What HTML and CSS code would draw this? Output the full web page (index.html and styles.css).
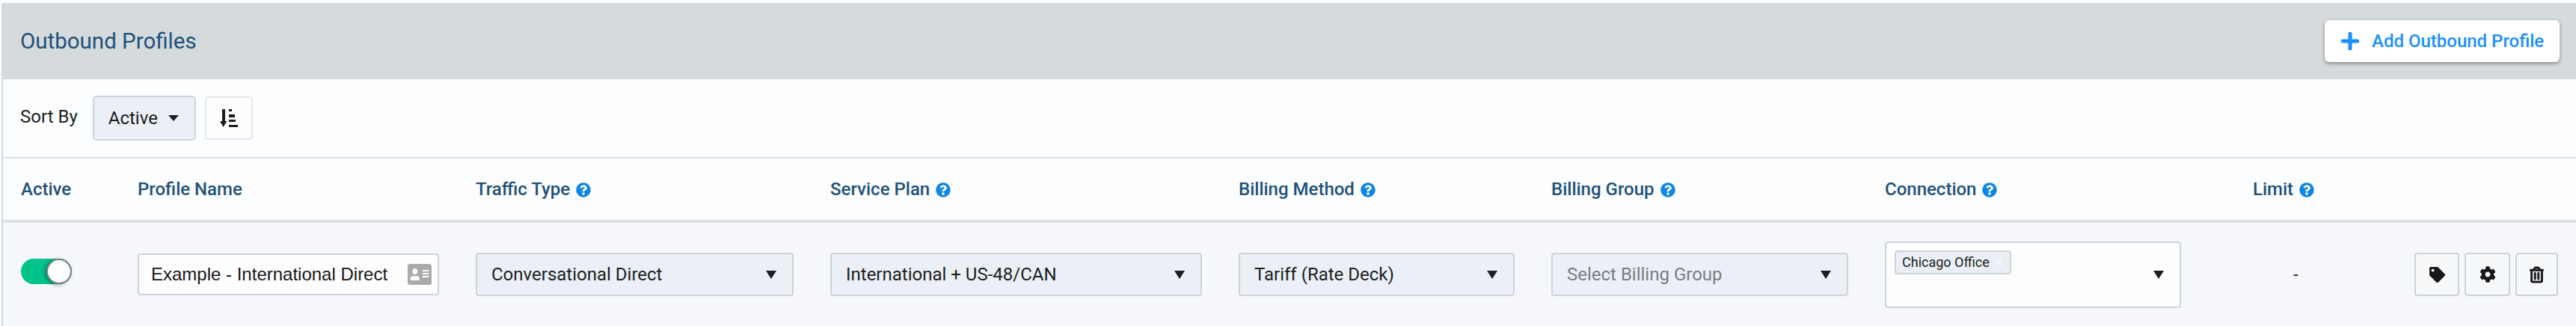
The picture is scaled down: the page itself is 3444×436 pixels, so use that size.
FILE: index.html
```html
<!DOCTYPE html>
<html lang="en">
<head>
  <meta charset="UTF-8" />
  <meta name="viewport" content="width=device-width, initial-scale=1.0" />
  <title>Outbound Profiles</title>
  <link rel="stylesheet" href="styles.css">
</head>
<body>
  <svg class="sprite" xmlns="http://www.w3.org/2000/svg">
    <symbol id="icon-help" viewBox="0 0 512 512">
      <path d="M504 256c0 136.997-111.043 248-248 248S8 392.997 8 256C8 119.083 119.043 8 256 8s248 111.083 248 248zM262.655 90c-54.497 0-89.255 22.957-116.549 63.758-3.536 5.286-2.353 12.415 2.715 16.258l34.699 26.31c5.205 3.947 12.621 3.008 16.665-2.122 17.864-22.658 30.113-35.797 57.303-35.797 20.429 0 45.698 13.148 45.698 32.958 0 14.976-12.363 22.667-32.534 33.976C247.128 238.528 216 254.941 216 296v4c0 6.627 5.373 12 12 12h56c6.627 0 12-5.373 12-12v-1.333c0-28.462 83.186-29.647 83.186-106.667 0-58.002-60.165-102-116.531-102zM256 338c-25.365 0-46 20.635-46 46 0 25.364 20.635 46 46 46s46-20.636 46-46c0-25.365-20.635-46-46-46z"/>
    </symbol>
  </svg>

  <div class="panel">
    <div class="panel-head">
      <div class="panel-title">Outbound Profiles</div>
      <button class="add-btn">
        <svg class="add-icon" viewBox="0 0 24 24"><path d="M12 2v20M2 12h20"/></svg>
        Add Outbound Profile
      </button>
    </div>

    <div class="toolbar">
      <span class="sort-label">Sort By</span>
      <div class="sort-select">Active <span class="caret"></span></div>
      <button class="sort-btn">
        <svg viewBox="0 0 24 24" width="24" height="24"><path d="M3 0h4v16h2.500L4.500 24 0 16h3z"/><rect x="12" y="0" width="4" height="3"/><rect x="12" y="7" width="8" height="4"/><rect x="12" y="14" width="9" height="3"/><rect x="12" y="21" width="12" height="3"/></svg>
      </button>
    </div>

    <div class="cols col-heads">
      <div>Active</div>
      <div>Profile Name</div>
      <div>Traffic Type <svg class="help"><use href="#icon-help"/></svg></div>
      <div>Service Plan <svg class="help"><use href="#icon-help"/></svg></div>
      <div>Billing Method <svg class="help"><use href="#icon-help"/></svg></div>
      <div>Billing Group <svg class="help"><use href="#icon-help"/></svg></div>
      <div>Connection <svg class="help"><use href="#icon-help"/></svg></div>
      <div>Limit <svg class="help"><use href="#icon-help"/></svg></div>
      <div></div>
    </div>

    <div class="cols profile-row">
      <div><div class="toggle"><span class="knob"></span></div></div>
      <div>
        <div class="name-input">
          <span>Example - International Direct</span>
          <svg class="card-icon" viewBox="0 32 576 448" preserveAspectRatio="none"><path d="M528 32H48C21.5 32 0 53.5 0 80v352c0 26.5 21.5 48 48 48h480c26.5 0 48-21.5 48-48V80c0-26.5-21.5-48-48-48zm-352 96c35.3 0 64 28.7 64 64s-28.7 64-64 64-64-28.7-64-64 28.7-64 64-64zm112 236.8c0 10.6-10 19.2-22.4 19.2H86.4C74 384 64 375.4 64 364.8v-19.2c0-31.8 30.1-57.6 67.2-57.6h5c12.3 5.1 25.7 8 39.8 8s27.6-2.9 39.8-8h5c37.1 0 67.2 25.8 67.2 57.6v19.2zM512 312c0 4.4-3.6 8-8 8H360c-4.4 0-8-3.6-8-8v-16c0-4.4 3.6-8 8-8h144c4.4 0 8 3.6 8 8v16zm0-64c0 4.4-3.6 8-8 8H360c-4.4 0-8-3.6-8-8v-16c0-4.4 3.6-8 8-8h144c4.4 0 8 3.6 8 8v16zm0-64c0 4.4-3.6 8-8 8H360c-4.4 0-8-3.6-8-8v-16c0-4.4 3.6-8 8-8h144c4.4 0 8 3.6 8 8v16z"/></svg>
        </div>
      </div>
      <div><div class="select w-traffic">Conversational Direct <span class="caret"></span></div></div>
      <div><div class="select w-plan">International + US-48/CAN <span class="caret"></span></div></div>
      <div><div class="select w-method">Tariff (Rate Deck) <span class="caret"></span></div></div>
      <div><div class="select w-group placeholder">Select Billing Group <span class="caret"></span></div></div>
      <div>
        <div class="multi">
          <span class="tag">Chicago Office <span class="tag-x">×</span></span>
          <span class="caret"></span>
        </div>
      </div>
      <div class="limit">-</div>
      <div class="actions">
        <button class="act-btn w-tag">
          <svg viewBox="0 0 512 512" width="21" height="21"><path d="M0 252.118V48C0 21.49 21.49 0 48 0h204.118a48 48 0 0 1 33.941 14.059l211.882 211.882c18.745 18.745 18.745 49.137 0 67.882L293.823 497.941c-18.745 18.745-49.137 18.745-67.882 0L14.059 286.059A48 48 0 0 1 0 252.118zM112 64c-26.51 0-48 21.49-48 48s21.49 48 48 48 48-21.49 48-48-21.49-48-48-48z"/></svg>
        </button>
        <button class="act-btn w-cog">
          <svg viewBox="0 0 512 512" width="22" height="22"><path d="M487.4 315.7l-42.6-24.6c4.3-23.2 4.3-47 0-70.2l42.6-24.6c4.9-2.8 7.1-8.6 5.5-14-11.1-35.6-30-67.8-54.7-94.6-3.8-4.1-10-5.1-14.8-2.3L380.8 110c-17.9-15.4-38.5-27.3-60.8-35.1V25.8c0-5.6-3.9-10.5-9.4-11.7-36.7-8.2-74.3-7.8-109.2 0-5.5 1.2-9.4 6.1-9.4 11.7V75c-22.2 7.9-42.8 19.8-60.8 35.1L88.7 85.5c-4.9-2.8-11-1.9-14.8 2.3-24.7 26.7-43.6 58.9-54.7 94.6-1.7 5.4.6 11.2 5.5 14L67.3 221c-4.3 23.2-4.3 47 0 70.2l-42.6 24.6c-4.9 2.8-7.1 8.6-5.5 14 11.1 35.6 30 67.8 54.7 94.6 3.8 4.1 10 5.1 14.8 2.3l42.6-24.6c17.9 15.4 38.5 27.3 60.8 35.1v49.2c0 5.6 3.9 10.5 9.4 11.7 36.7 8.2 74.3 7.8 109.2 0 5.5-1.2 9.4-6.1 9.4-11.7v-49.2c22.2-7.9 42.8-19.8 60.8-35.1l42.6 24.6c4.9 2.8 11 1.9 14.8-2.3 24.7-26.7 43.6-58.9 54.7-94.6 1.5-5.5-.7-11.3-5.6-14.1zM256 336c-44.1 0-80-35.9-80-80s35.9-80 80-80 80 35.9 80 80-35.9 80-80 80z"/></svg>
        </button>
        <button class="act-btn w-trash">
          <svg class="trash-icon" viewBox="0 0 448 512" width="19" height="21"><path d="M268 416h24a12 12 0 0 0 12-12V188a12 12 0 0 0-12-12h-24a12 12 0 0 0-12 12v216a12 12 0 0 0 12 12zM432 80h-82.41l-34-56.7A48 48 0 0 0 274.41 0H173.59a48 48 0 0 0-41.16 23.3L98.41 80H16A16 16 0 0 0 0 96v16a16 16 0 0 0 16 16h16v336a48 48 0 0 0 48 48h288a48 48 0 0 0 48-48V128h16a16 16 0 0 0 16-16V96a16 16 0 0 0-16-16zM171.84 50.91A6 6 0 0 1 177 48h94a6 6 0 0 1 5.15 2.91L293.61 80H154.39zM368 464H80V128h288zm-212-48h24a12 12 0 0 0 12-12V188a12 12 0 0 0-12-12h-24a12 12 0 0 0-12 12v216a12 12 0 0 0 12 12z"/></svg>
        </button>
      </div>
    </div>
  </div>
</body>
</html>
```

FILE: styles.css
```css
* {
  box-sizing: border-box;
}
body {
  font-family: Roboto, Arial, sans-serif;
  font-size: 24px;
  color: #1b1e21;
  background-color: #fcfdfe;
  margin: 0;
  padding: 4px 0 0 2px;
  height: 436px;
  overflow: hidden;
}
button {
  font-family: inherit;
  cursor: pointer;
}
.sprite {
  display: none;
}
.panel {
  border-left: 2px solid #d5dadf;
  height: 432px;
}

/* title bar */
.panel-head {
  height: 102px;
  margin-left: -2px;
  padding: 0 22px 0 25px;
  background-color: #d5dadd;
  display: flex;
  justify-content: space-between;
  align-items: center;
}
.panel-title {
  font-size: 29.500px;
  color: #1e5179;
}
.add-btn {
  width: 314px;
  height: 56px;
  padding: 0 0 0 22px;
  display: flex;
  align-items: center;
  gap: 17px;
  border: none;
  border-radius: 6px;
  background-color: #fff;
  box-shadow: 0 2px 5px rgba(0, 0, 0, 0.4);
  color: #1a8fff;
  font-size: 24px;
  font-weight: 500;
}
.add-icon {
  width: 24px;
  height: 24px;
  fill: none;
  stroke: #1a8fff;
  stroke-width: 5;
  stroke-linecap: round;
}

/* sort bar */
.toolbar {
  height: 106px;
  padding-left: 23px;
  display: flex;
  align-items: center;
  border-bottom: 2px solid #d8dde1;
}
.sort-label {
  margin: -4px 20px 0 0;
}
.sort-select {
  width: 138px;
  height: 60px;
  padding-left: 19px;
  display: flex;
  align-items: center;
  gap: 14px;
  background-color: #eaf0f6;
  border: 2px solid #ccd3db;
  border-radius: 5px;
}
.sort-btn {
  width: 64px;
  height: 58px;
  margin-left: 12px;
  padding: 0;
  display: flex;
  align-items: center;
  justify-content: center;
  background-color: #fdfdfe;
  border: 2px solid #e4e9ee;
  border-radius: 4px;
  fill: #1b1e21;
}
.caret {
  width: 0;
  height: 0;
  border-left: 7px solid transparent;
  border-right: 7px solid transparent;
  border-top: 8px solid #1b1e21;
}

/* shared columns */
.cols {
  display: grid;
  grid-template-columns: 156px 452px 474px 546px 418px 446px 492px 216px 1fr;
  padding-left: 24px;
}
.col-heads {
  height: 86px;
  align-items: center;
  font-weight: 500;
  color: #1e5179;
  border-bottom: 4px solid #dce1e5;
}
.help {
  width: 20px;
  height: 20px;
  margin-left: 2px;
  fill: #0e86e6;
  vertical-align: -3px;
}

/* profile row */
.profile-row {
  height: 138px;
  align-items: center;
  background-color: #f5f7fa;
}
.toggle {
  position: relative;
  width: 68px;
  height: 34px;
  margin-top: -8px;
  border-radius: 17px;
  background-color: #00c389;
}
.knob {
  position: absolute;
  right: 0;
  top: 0;
  width: 34px;
  height: 34px;
  border-radius: 50%;
  background-color: #fff;
  border: 2px solid #7a8288;
  box-shadow: -2px 1px 5px rgba(0, 0, 0, 0.35);
}
.name-input {
  width: 403px;
  height: 56px;
  padding: 0 8px 0 16px;
  display: flex;
  align-items: center;
  justify-content: space-between;
  font-family: "Liberation Sans", Arial, sans-serif;
  color: #15171a;
  background-color: #fdfdfe;
  border: 2px solid #ccd3de;
  border-radius: 4px;
}
.card-icon {
  width: 32px;
  height: 28px;
  fill: #aaaaaa;
}
.select {
  height: 58px;
  padding: 0 21px 0 19px;
  display: flex;
  align-items: center;
  justify-content: space-between;
  background-color: #eaf0f6;
  border: 2px solid #ccd3db;
  border-radius: 4px;
}
.select .caret,
.multi .caret {
  border-left-width: 7px;
  border-right-width: 7px;
  border-top-width: 11px;
}
.w-traffic {
  width: 425px;
}
.w-plan {
  width: 497px;
}
.w-method {
  width: 369px;
}
.w-group {
  width: 397px;
}
.placeholder {
  color: #797d82;
}
.multi {
  width: 396px;
  height: 89px;
  padding: 10px 21px 0 11px;
  display: flex;
  align-items: center;
  justify-content: space-between;
  background-color: #fdfdfe;
  border: 2px solid #ccd3de;
  border-radius: 4px;
}
.multi .tag {
  align-self: flex-start;
  width: 156px;
  height: 32px;
  padding-left: 8px;
  display: flex;
  align-items: center;
  gap: 7px;
  font-size: 18px;
  background-color: #e9eff5;
  border: 2px solid #ccd3db;
  border-radius: 4px;
}
.tag-x {
  color: #f8fafc;
  font-size: 22px;
}
.multi .caret {
  margin-bottom: 10px;
}
.limit {
  padding-left: 54px;
}
.actions {
  display: flex;
  gap: 7px;
}
.act-btn {
  height: 58px;
  padding: 0;
  display: flex;
  align-items: center;
  justify-content: center;
  background-color: #f6f8fa;
  border: 2px solid #ccd3db;
  border-radius: 4px;
  fill: #15171a;
}
.trash-icon {
  stroke: #15171a;
  stroke-width: 22;
  overflow: visible;
}
.w-tag {
  width: 60px;
}
.w-cog {
  width: 61px;
}
.w-trash {
  width: 57px;
}
```
